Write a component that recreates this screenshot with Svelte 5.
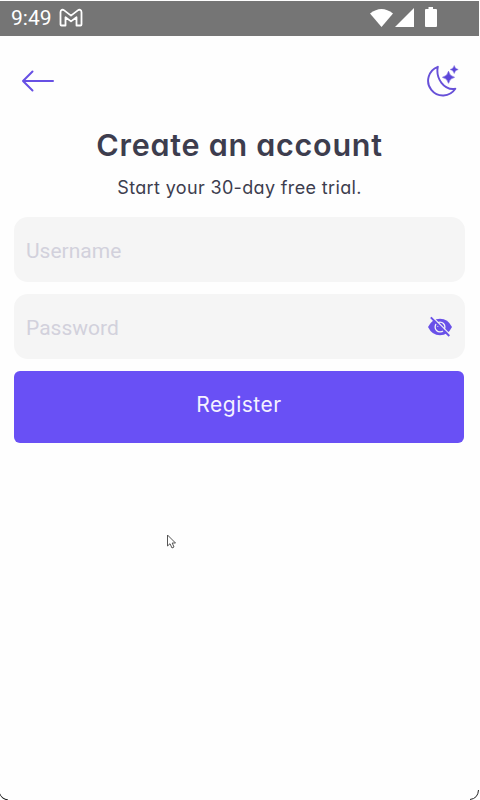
<script>
  let username = $state('');
  let password = $state('');
  let hidden = $state(true);
</script>

<div class="screen">
  <header class="status">
    <span class="time">9:49</span>
    <svg class="mail" width="24" height="20" viewBox="0 0 24 20">
      <path d="M1.5 16.5V4.2C1.5 1.8 3.6 1.2 5.2 2.4L12 7.6l6.800-5.200C20.400 1.200 22.500 1.800 22.500 4.200V16.500Q22.500 17.500 21.500 17.500H17.500V9.200L12 13.400 6.500 9.200V17.500H2.500Q1.500 17.500 1.500 16.500Z" />
    </svg>
    <div class="signals">
      <svg width="70" height="22" viewBox="0 0 70 22" fill="#fff">
        <path d="M0 5.500Q11.500-3.500 23 5.500L11.500 19Z" />
        <path d="M25 19L44 0V19Z" />
        <path d="M58.500-1h4.500v2h3q1 0 1 1v16q0 1-1 1h-10q-1 0-1-1V2q0-1 1-1h2.500Z" />
      </svg>
    </div>
  </header>

  <nav>
    <button class="icon" aria-label="Back">
      <svg width="34" height="24" viewBox="0 0 34 24" fill="none" stroke="#6750e4" stroke-width="2" stroke-linecap="round" stroke-linejoin="round">
        <path d="M32 12H2M11.500 2.500L2 12L11.500 21.500" />
      </svg>
    </button>
    <button class="icon" aria-label="Dark mode">
      <svg width="32" height="32" viewBox="0 0 32 32">
        <path d="M10.800 1.800A14.800 14.800 0 1 0 28.300 23.800C17 25.500 8.500 13.500 10.800 1.800Z" fill="none" stroke="#6750d8" stroke-width="1.900" stroke-linejoin="round" />
        <path d="M21.500 6.300Q22.500 11.300 27.500 12.300Q22.500 13.300 21.500 18.300Q20.500 13.300 15.500 12.300Q20.500 11.300 21.500 6.300Z" fill="#5b45d8" stroke="#5b45d8" stroke-width=".6" />
        <path d="M27.200.5Q27.900 3.800 31.200 4.500Q27.900 5.200 27.200 8.500Q26.500 5.200 23.200 4.500Q26.500 3.800 27.200.5Z" fill="#5b45d8" stroke="#5b45d8" stroke-width=".4" />
      </svg>
    </button>
  </nav>

  <main>
    <h1>Create an account</h1>
    <p>Start your 30-day free trial.</p>
    <form onsubmit={(e) => e.preventDefault()}>
      <label class="field">
        <input class="user" placeholder="Username" bind:value={username} />
      </label>
      <div class="field">
        <input class="pass" placeholder="Password" type={hidden ? 'password' : 'text'} bind:value={password} />
        <button type="button" class="icon" aria-label="Show password" onclick={() => (hidden = !hidden)}>
          <svg width="26" height="22" viewBox="0 0 26 22">
            <path d="M1 11Q5 2.700 13 2.700T25 11Q21 19.300 13 19.300T1 11Z" fill="#6950e8" />
            <circle cx="13" cy="11" r="4.900" fill="none" stroke="#f5f5f5" stroke-width="1.300" />
            <path d="M10.800 11a2.300 2.300 0 0 1 2.200-2.300" fill="none" stroke="#f5f5f5" stroke-width="1" />
            <path d="M5 .5L24 19.500" stroke="#f5f5f5" stroke-width="1.200" />
            <path d="M3.800 1.300L22.300 20" stroke="#6950e8" stroke-width="1.900" />
          </svg>
        </button>
      </div>
      <button class="submit">Register</button>
    </form>
  </main>

  <svg class="cursor" width="12" height="17" viewBox="0 0 12 17">
    <path d="M1.500 1V12L4 9.700L6 14L8 13L6.200 9H9.500Z" fill="#fff" stroke="#555" stroke-width="1" />
  </svg>
  <svg class="corner left" width="8" height="8" viewBox="0 0 8 8"><path d="M0 8V1.500Q2 6.500 8 7.500V8Z" fill="#111" /><path d="M0 8V3Q2 7 6 8Z" fill="#fff" /></svg>
  <svg class="corner right" width="10" height="10" viewBox="0 0 10 10"><path d="M9.500 0Q9 8.500 1 9.500" fill="none" stroke="#222" /></svg>
</div>

<style>
  :global(body) { background: #fff; }
  .screen {
    position: relative;
    box-sizing: border-box;
    width: 480px;
    height: 800px;
    padding: 1px 1px 0 0;
    overflow: hidden;
    background: #fefefe;
    font-family: Inter, 'Open Sans', sans-serif;
    font-feature-settings: 'cv11';
    color: #3d3d4e;
  }
  .status {
    display: flex;
    align-items: center;
    box-sizing: border-box;
    height: 35px;
    padding: 0 39px 0 11px;
    background: #757575;
    color: #fff;
  }
  .time { font: 21px/35px Roboto, sans-serif; }
  .mail { margin: -1px 0 0 7px; fill: none; stroke: #fff; stroke-width: 1.8; stroke-linejoin: round; }
  .signals { display: flex; margin: 1px 0 0 auto; }
  .signals svg { overflow: visible; }
  nav {
    display: flex;
    justify-content: space-between;
    align-items: center;
    height: 90px;
    box-sizing: border-box;
    padding: 0 20px 0 21px;
  }
  button { border: 0; padding: 0; cursor: pointer; font-family: inherit; }
  .icon { display: flex; background: none; }
  main { padding: 0 14px; }
  h1 {
    margin: -1px 0 0;
    text-align: center;
    font-size: 30.5px;
    font-weight: 600;
    line-height: 40px;
    letter-spacing: 0.75px;
  }
  p { margin: 9px 0 0; text-align: center; font-size: 18px; line-height: 28px; letter-spacing: 0.35px; }
  form { display: flex; flex-direction: column; gap: 12px; margin-top: 15px; }
  .field {
    display: flex;
    align-items: center;
    box-sizing: border-box;
    height: 65px;
    padding: 0 12px;
    background: #f5f5f5;
    border-radius: 14px;
  }
  input {
    flex: 1;
    min-width: 0;
    padding: 3px 0 0;
    border: 0;
    outline: 0;
    background: none;
    color: #3d3d4e;
    font: 21px/28px Roboto, sans-serif;
  }
  input::placeholder { color: #d2d1dc; opacity: 1; }
  .submit {
    height: 72px;
    margin-right: 1px;
    padding-bottom: 5px;
    border-radius: 6px;
    background: #6950f5;
    color: #f5f2ff;
    font-size: 21px;
    letter-spacing: 0.5px;
    font-feature-settings: 'cv11';
  }
  .cursor { position: absolute; left: 166px; top: 534px; }
  .corner { position: absolute; bottom: 0; }
  .left { left: 0; }
  .right { right: 1px; }
</style>
